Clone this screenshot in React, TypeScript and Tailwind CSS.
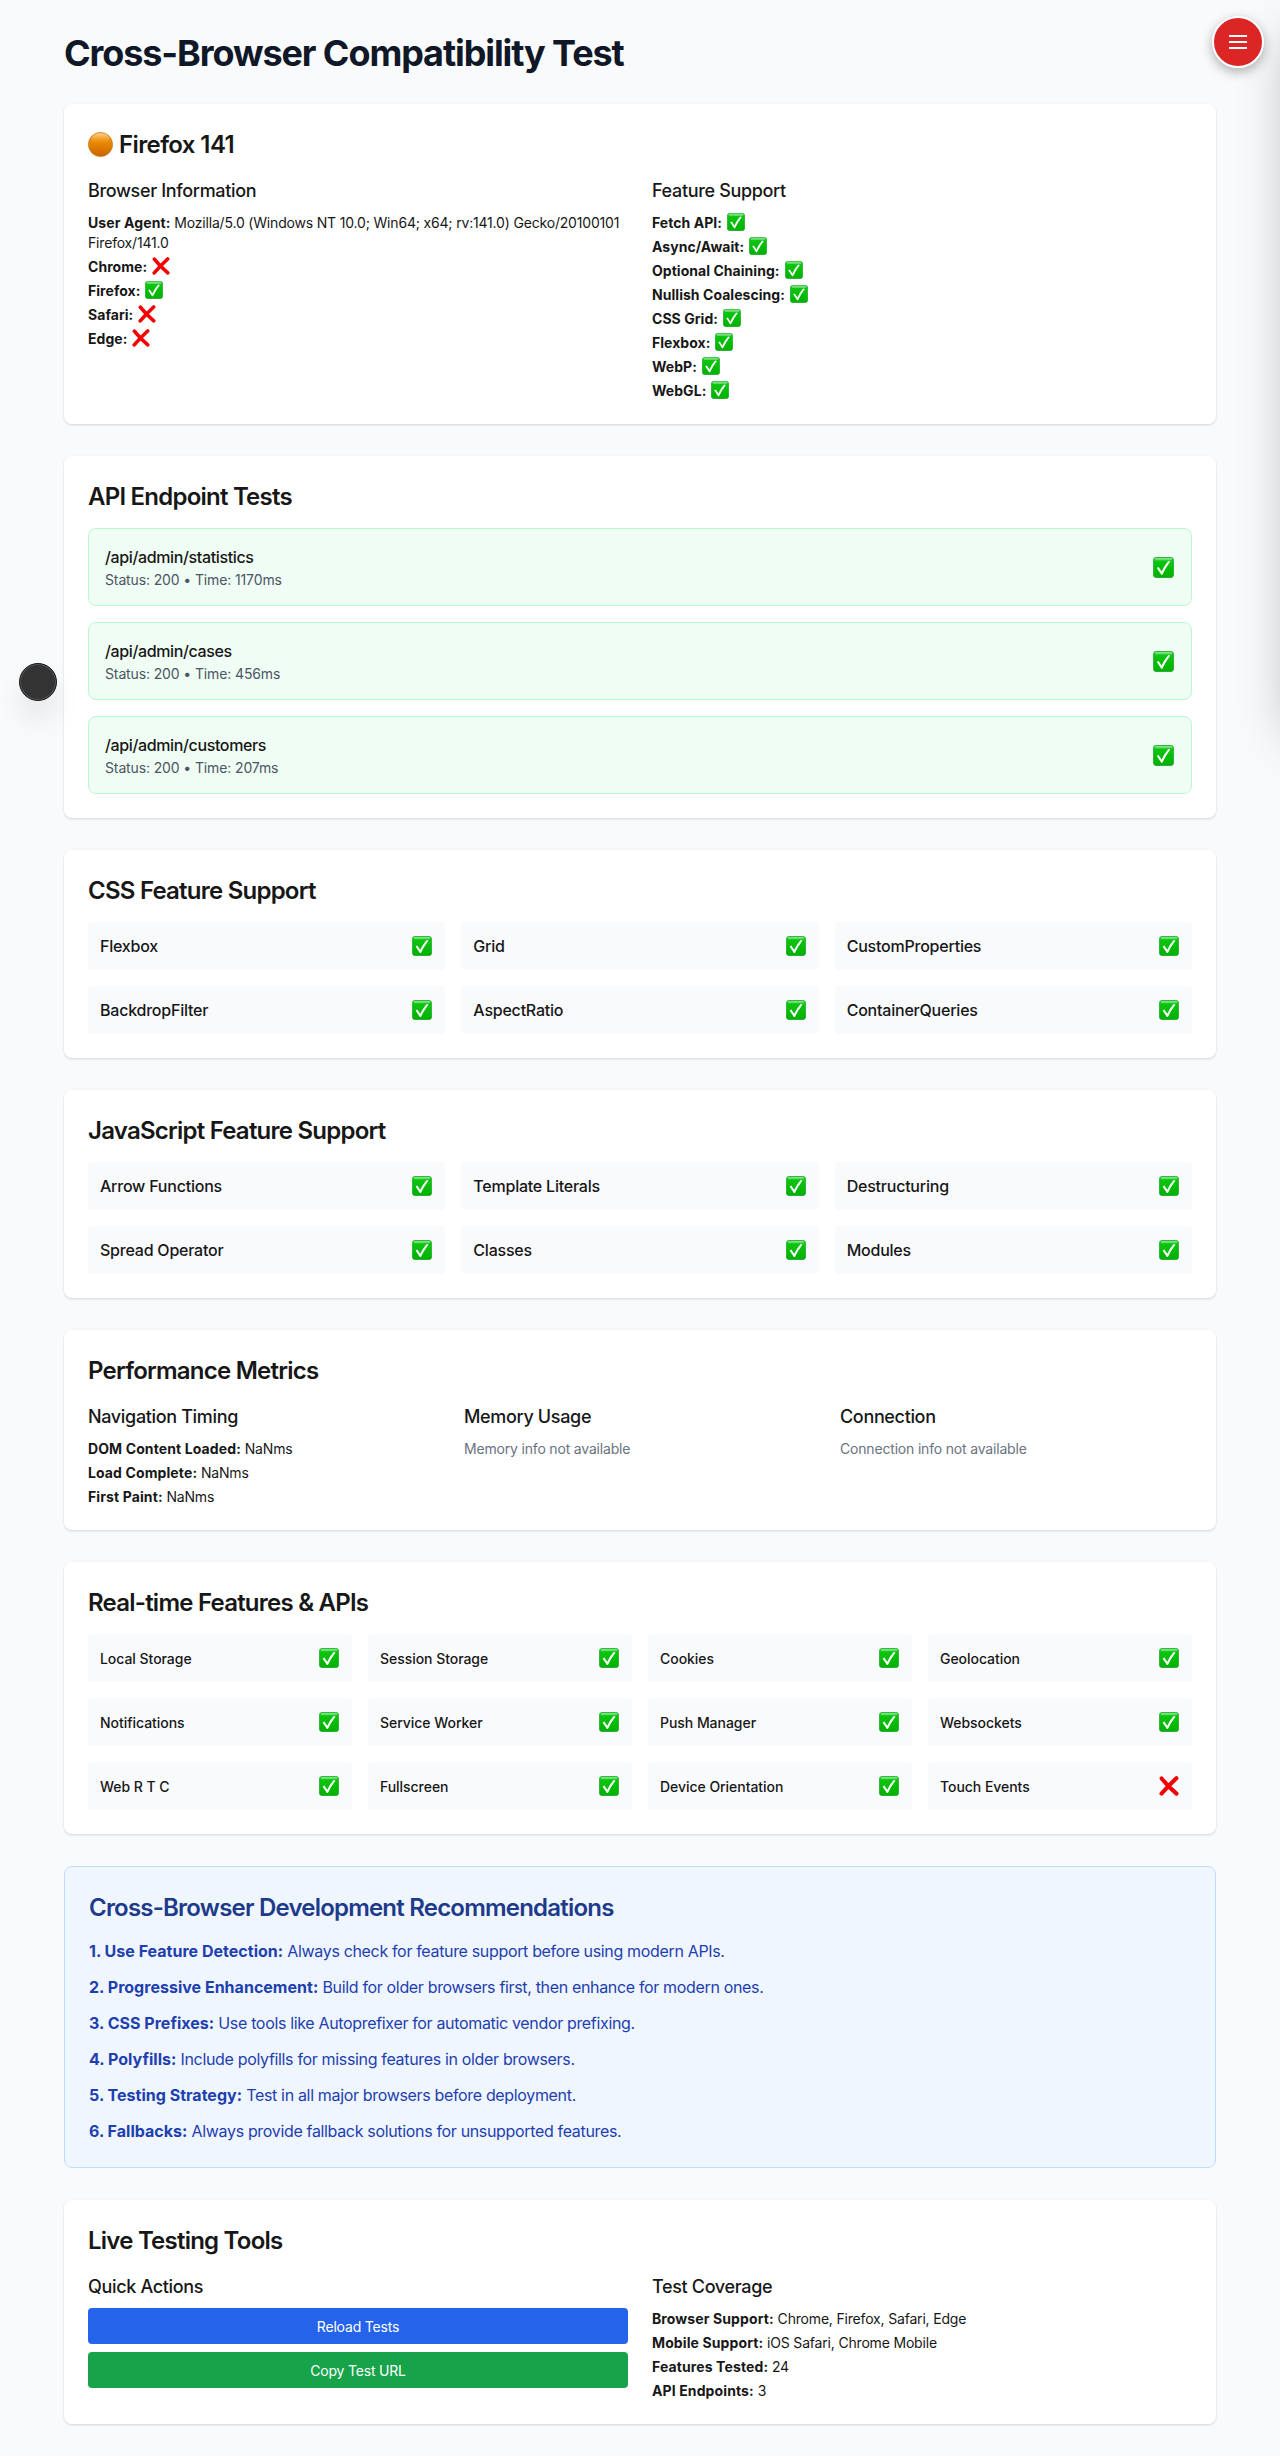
import type { ReactNode } from "react";

function Check({ className }: { className: string }) {
  return (
    <svg viewBox="0 0 20 20" className={className} aria-label="supported">
      <defs>
        <linearGradient id="checkFill" x1="0" y1="0" x2="0" y2="1">
          <stop offset="0" stopColor="#0fca14" />
          <stop offset="1" stopColor="#00b000" />
        </linearGradient>
        <linearGradient id="checkGloss" x1="0" y1="0" x2="0" y2="1">
          <stop offset="0" stopColor="#8ee58f" />
          <stop offset="1" stopColor="#4fd555" />
        </linearGradient>
      </defs>
      <rect x="0.3" y="0.3" width="19.4" height="19.4" rx="3.2" fill="url(#checkFill)" stroke="#189a2c" strokeWidth="0.6" />
      <rect x="1.6" y="0.9" width="16.8" height="2.4" rx="1.2" fill="url(#checkGloss)" />
      <path d="M3.6 10.4 L5.3 9.5 L8.2 13.8 Q11 8 14.6 3.9 L16.5 4.4 Q12 10.2 8.9 17 L7.9 17 Z" fill="#fff" />
    </svg>
  );
}

function Cross({ className }: { className: string }) {
  return (
    <svg viewBox="0 0 20 20" className={className} aria-label="unsupported">
      <path d="M2.6 2.4 Q9 10.5 17.5 17.6 M17.4 2.2 Q9.5 9.5 2.5 17.6" fill="none" stroke="#f30000" strokeWidth="4" strokeLinecap="round" />
    </svg>
  );
}

function Card({ title, children }: { title: ReactNode; children: ReactNode }) {
  return (
    <section className="rounded-lg bg-white p-6 shadow-[0_1px_3px_rgba(0,0,0,0.1),0_1px_2px_rgba(0,0,0,0.06)]">
      <h2 className="mb-[15px] flex items-center pt-px text-2xl font-semibold tracking-[-0.032em]">{title}</h2>
      {children}
    </section>
  );
}

function SubHeading({ children }: { children: ReactNode }) {
  return <h3 className="mb-[7px] pt-px text-lg font-[450] tracking-[-0.019em]">{children}</h3>;
}

function SmallLines({ children }: { children: ReactNode }) {
  return <div className="-mb-px space-y-1 pt-px text-sm tracking-[-0.013em] whitespace-nowrap">{children}</div>;
}

function Flag({ label, ok }: { label: string; ok: boolean }) {
  return (
    <div className="flex h-5 items-center">
      <strong className="mr-[5px] font-bold tracking-[0.003em]">{label}:</strong>
      {ok ? <Check className="mb-[3px] size-[18px]" /> : <Cross className="mb-[3px] size-[18px]" />}
    </div>
  );
}

function Fact({ label, value }: { label: string; value: string }) {
  return (
    <div>
      <strong className="font-bold tracking-[0.008em]">{label}:</strong> {value}
    </div>
  );
}

function Tile({ label, ok = true, small = false }: { label: string; ok?: boolean; small?: boolean }) {
  return (
    <div className="flex h-12 items-center justify-between rounded bg-[#f9fafc] px-3">
      <span className={small ? "pt-px text-sm font-medium tracking-[-0.003em]" : "font-medium tracking-[-0.014em]"}>{label}</span>
      {ok ? <Check className="mr-px size-5" /> : <Cross className="mr-px size-5" />}
    </div>
  );
}

const browsers: [string, boolean][] = [["Chrome", false], ["Firefox", true], ["Safari", false], ["Edge", false]];
const features = ["Fetch API", "Async/Await", "Optional Chaining", "Nullish Coalescing", "CSS Grid", "Flexbox", "WebP", "WebGL"];
const endpoints: [string, number][] = [["/api/admin/statistics", 1170], ["/api/admin/cases", 456], ["/api/admin/customers", 207]];
const cssFeatures = ["Flexbox", "Grid", "CustomProperties", "BackdropFilter", "AspectRatio", "ContainerQueries"];
const jsFeatures = ["Arrow Functions", "Template Literals", "Destructuring", "Spread Operator", "Classes", "Modules"];
const realtime = ["Local Storage", "Session Storage", "Cookies", "Geolocation", "Notifications", "Service Worker", "Push Manager", "Websockets", "Web R T C", "Fullscreen", "Device Orientation", "Touch Events"];
const tips = [
  ["1. Use Feature Detection:", "Always check for feature support before using modern APIs."],
  ["2. Progressive Enhancement:", "Build for older browsers first, then enhance for modern ones."],
  ["3. CSS Prefixes:", "Use tools like Autoprefixer for automatic vendor prefixing."],
  ["4. Polyfills:", "Include polyfills for missing features in older browsers."],
  ["5. Testing Strategy:", "Test in all major browsers before deployment."],
  ["6. Fallbacks:", "Always provide fallback solutions for unsupported features."],
];

export default function App() {
  return (
    <div className="relative overflow-hidden bg-[#f9fafc] py-8 font-['Inter',sans-serif] text-[#171717] antialiased">
      <main className="mx-auto flex w-[1152px] flex-col gap-8">
        <h1 className="-mb-px pt-px text-4xl font-bold tracking-[-0.0305em] whitespace-nowrap text-gray-900">Cross-Browser Compatibility Test</h1>

        <Card
          title={
            <>
              <svg viewBox="0 0 24 24" className="mr-[6px] -mt-0.5 size-[25px]">
                <defs>
                  <linearGradient id="orange" x1="0" y1="0" x2="0" y2="1">
                    <stop offset="0" stopColor="#f0a030" />
                    <stop offset="0.45" stopColor="#e88600" />
                    <stop offset="1" stopColor="#c96300" />
                  </linearGradient>
                  <linearGradient id="orangeGloss" x1="0" y1="0" x2="0" y2="1">
                    <stop offset="0" stopColor="#ffd48a" />
                    <stop offset="1" stopColor="#f09a20" stopOpacity="0" />
                  </linearGradient>
                </defs>
                <circle cx="12" cy="12" r="11.6" fill="url(#orange)" stroke="#c87a1c" strokeWidth="0.7" />
                <ellipse cx="12" cy="6.2" rx="8.6" ry="5" fill="url(#orangeGloss)" />
              </svg>
              <span className="tracking-[-0.025em]">Firefox 141</span>
            </>
          }
        >
          <div className="grid grid-cols-2 gap-6">
            <div>
              <SubHeading>Browser Information</SubHeading>
              <SmallLines>
                <div>
                  <strong className="font-bold tracking-[0.008em]">User Agent:</strong> Mozilla/5.0 (Windows NT 10.0; Win64; x64; rv:141.0) Gecko/20100101
                  <br />
                  Firefox/141.0
                </div>
                {browsers.map(([b, ok]) => <Flag key={b} label={b} ok={ok} />)}
              </SmallLines>
            </div>
            <div>
              <SubHeading>Feature Support</SubHeading>
              <SmallLines>
                {features.map((f) => <Flag key={f} label={f} ok />)}
              </SmallLines>
            </div>
          </div>
        </Card>

        <Card title="API Endpoint Tests">
          <div className="flex flex-col gap-4">
            {endpoints.map(([path, ms]) => (
              <div key={path} className="flex items-center justify-between rounded-lg border border-[#bbf7d0] bg-[#f0fdf4] p-4">
                <div>
                  <div className="font-medium tracking-[-0.023em]">{path}</div>
                  <div className="-mb-px pt-px text-sm tracking-[-0.009em] text-[#4b5563]">Status: 200 • Time: {ms}ms</div>
                </div>
                <Check className="mr-px size-[21px]" />
              </div>
            ))}
          </div>
        </Card>

        <Card title="CSS Feature Support">
          <div className="grid grid-cols-3 gap-4">{cssFeatures.map((f) => <Tile key={f} label={f} />)}</div>
        </Card>

        <Card title="JavaScript Feature Support">
          <div className="grid grid-cols-3 gap-4">{jsFeatures.map((f) => <Tile key={f} label={f} />)}</div>
        </Card>

        <Card title="Performance Metrics">
          <div className="grid grid-cols-3 gap-6">
            <div>
              <SubHeading>Navigation Timing</SubHeading>
              <SmallLines>
                <Fact label="DOM Content Loaded" value="NaNms" />
                <Fact label="Load Complete" value="NaNms" />
                <Fact label="First Paint" value="NaNms" />
              </SmallLines>
            </div>
            <div>
              <SubHeading>Memory Usage</SubHeading>
              <SmallLines>
                <p className="text-[#6b7280]">Memory info not available</p>
              </SmallLines>
            </div>
            <div>
              <SubHeading>Connection</SubHeading>
              <SmallLines>
                <p className="text-[#6b7280]">Connection info not available</p>
              </SmallLines>
            </div>
          </div>
        </Card>

        <Card title="Real-time Features & APIs">
          <div className="grid grid-cols-4 gap-4">
            {realtime.map((f) => <Tile key={f} label={f} small ok={f !== "Touch Events"} />)}
          </div>
        </Card>

        <section className="rounded-lg border border-[#bfdbfe] bg-[#eff6ff] p-6">
          <h2 className="mb-[15px] pt-px text-2xl font-semibold tracking-[-0.033em] text-[#1e3a8a]">Cross-Browser Development Recommendations</h2>
          <div className="space-y-3 tracking-[-0.021em] text-[#1e40af]">
            {tips.map(([head, body]) => (
              <p key={head}>
                <strong className="font-bold tracking-[0.001em]">{head}</strong> {body}
              </p>
            ))}
          </div>
        </section>

        <Card title="Live Testing Tools">
          <div className="grid grid-cols-2 gap-6">
            <div>
              <SubHeading>Quick Actions</SubHeading>
              <div className="flex flex-col gap-2 text-sm tracking-[-0.013em] text-white">
                <button className="rounded bg-[#2563eb] px-4 pt-[9px] pb-[7px]">Reload Tests</button>
                <button className="rounded bg-[#16a34a] px-4 pt-[9px] pb-[7px]">Copy Test URL</button>
              </div>
            </div>
            <div>
              <SubHeading>Test Coverage</SubHeading>
              <SmallLines>
                <Fact label="Browser Support" value="Chrome, Firefox, Safari, Edge" />
                <Fact label="Mobile Support" value="iOS Safari, Chrome Mobile" />
                <Fact label="Features Tested" value="24" />
                <Fact label="API Endpoints" value="3" />
              </SmallLines>
            </div>
          </div>
        </Card>
      </main>

      <div className="absolute top-0 left-full h-[720px] w-80 bg-white shadow-[0_25px_50px_-12px_rgba(0,0,0,0.3)]" />
      <button className="absolute top-4 right-4 flex size-[52px] items-center justify-center rounded-full border-2 border-white bg-[#dc2626] shadow-[0_4px_12px_rgba(0,0,0,0.3)]">
        <svg viewBox="0 0 24 24" className="size-6" stroke="#fff" strokeWidth="2">
          <path d="M3 6h18M3 12h18M3 18h18" />
        </svg>
      </button>
      <div className="absolute top-[663px] left-[19px] size-[38px] rounded-full border border-[#1a1a1a] bg-[#333] shadow-[0_18px_28px_-2px_rgba(0,0,0,0.1)] ring-1 ring-[#555] ring-inset" />
    </div>
  );
}
